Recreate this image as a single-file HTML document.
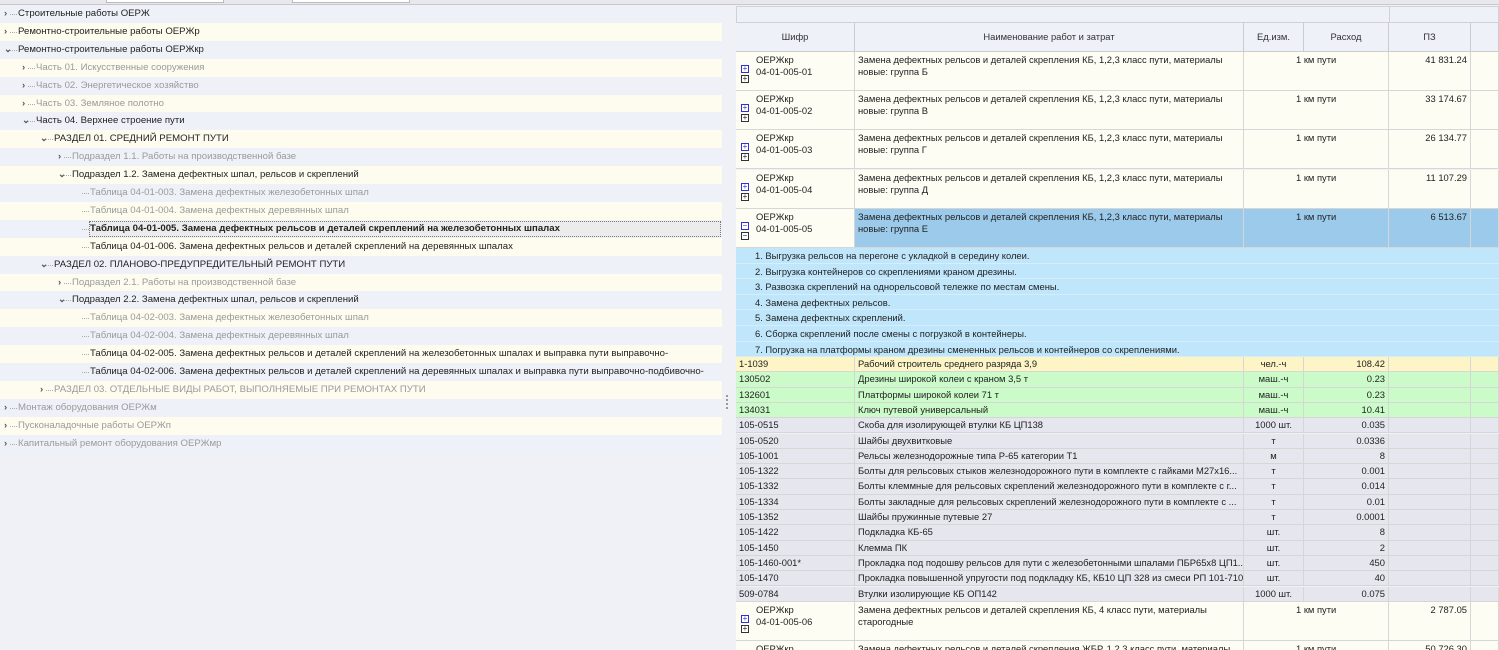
<!DOCTYPE html>
<html style="overflow:hidden;width:1499px;height:650px"><head><meta charset="utf-8"><style>
*{margin:0;padding:0;box-sizing:border-box}
body{width:1499px;height:650px;overflow:hidden;background:#eff1f6;font-family:"Liberation Sans",sans-serif;font-size:10px;color:#222;position:relative}
.a{position:absolute;white-space:nowrap;overflow:hidden}
.tr{position:absolute;left:0;width:722px;height:18px;line-height:18px}
.tr span{position:absolute;font-size:9.6px}
.ar{position:absolute;font-size:11px;color:#555;font-weight:bold}
.g{color:#9a9a9a}
.c{position:absolute;border-right:1px solid #d6d6d6;border-bottom:1px solid #d6d6d6;overflow:hidden;white-space:nowrap;padding:2px 3px;line-height:12px;font-size:9.4px}
.pm{position:absolute;width:8px;height:8px;border:1px solid #333;font-size:8px;line-height:6px;text-align:center;background:#fff}
</style></head><body>
<div class="a" style="left:0;top:0;width:1499px;height:5px;background:#e8e8ec;border-bottom:1px solid #c8c8cc"></div>
<div class="a" style="left:106px;top:0;width:118px;height:3px;border:1px solid #bbb;border-top:0;background:#fff"></div>
<div class="a" style="left:292px;top:0;width:118px;height:3px;border:1px solid #bbb;border-top:0;background:#fff"></div>
<div class="a" style="left:0;top:5px;width:722px;height:448px;background:#fff"></div>
<div id="tree"></div>
<div class="a" style="left:726px;top:395px;width:2px;height:14px;border-left:2px dotted #999"></div>
<div id="grid"></div>
<script>
var T=[[0,'>','Строительные работы ОЕРЖ',0],[0,'>','Ремонтно-строительные работы ОЕРЖр',0],[0,'v','Ремонтно-строительные работы ОЕРЖкр',0],
[1,'>','Часть 01. Искусственные сооружения',1],[1,'>','Часть 02. Энергетическое хозяйство',1],[1,'>','Часть 03. Земляное полотно',1],[1,'v','Часть 04. Верхнее строение пути',0],
[2,'v','РАЗДЕЛ 01. СРЕДНИЙ РЕМОНТ ПУТИ',0],[3,'>','Подраздел 1.1. Работы на производственной базе',1],[3,'v','Подраздел 1.2. Замена дефектных шпал, рельсов и скреплений',0],
[4,'','Таблица 04-01-003. Замена дефектных железобетонных шпал',1],[4,'','Таблица 04-01-004. Замена дефектных деревянных шпал',1],[4,'','Таблица 04-01-005. Замена дефектных рельсов и деталей скреплений на железобетонных шпалах',2],[4,'','Таблица 04-01-006. Замена дефектных рельсов и деталей скреплений на деревянных шпалах',0],
[2,'v','РАЗДЕЛ 02. ПЛАНОВО-ПРЕДУПРЕДИТЕЛЬНЫЙ РЕМОНТ ПУТИ',0],[3,'>','Подраздел 2.1. Работы на производственной базе',1],[3,'v','Подраздел 2.2. Замена дефектных шпал, рельсов и скреплений',0],
[4,'','Таблица 04-02-003. Замена дефектных железобетонных шпал',1],[4,'','Таблица 04-02-004. Замена дефектных деревянных шпал',1],[4,'','Таблица 04-02-005. Замена дефектных рельсов и деталей скреплений на железобетонных шпалах и выправка пути выправочно-подбивочно-рихтовочными машинами',0],[4,'','Таблица 04-02-006. Замена дефектных рельсов и деталей скреплений на деревянных шпалах и выправка пути выправочно-подбивочно-рихтовочными машинами',0],
[2,'>','РАЗДЕЛ 03. ОТДЕЛЬНЫЕ ВИДЫ РАБОТ, ВЫПОЛНЯЕМЫЕ ПРИ РЕМОНТАХ ПУТИ',1],[0,'>','Монтаж оборудования ОЕРЖм',1],[0,'>','Пусконаладочные работы ОЕРЖп',1],[0,'>','Капитальный ремонт оборудования ОЕРЖмр',1]];
var h='';T.forEach(function(r,i){var y=5+i*17.9,x=18+r[0]*18;
h+='<div class="tr" style="top:'+y+'px;background:'+(i%2?'#fdfcef':'#eef1f8')+'">';
if(r[1])h+='<span class="ar" style="left:'+(x-14)+'px">'+(r[1]=='>'?'›':'⌄')+'</span>';
h+='<span style="left:'+(x-8)+'px;top:9px;width:7px;border-top:1px dotted #aaa;height:0"></span>';
if(r[3]==2)h+='<span style="left:'+(x-1)+'px;top:1px;width:'+(722-x)+'px;height:16px;border:1px dotted #777;background:#ececec"></span>';
h+='<span class="'+(r[3]==1?'g':'')+'" style="left:'+x+'px;'+(r[3]==2?'font-weight:bold;color:#222':'')+'">'+r[2]+'</span></div>';});
document.getElementById('tree').innerHTML=h;
var X=[736,855,1244,1304,1389,1471,1499];
var g='<div class="a" style="left:736px;top:6px;width:763px;height:17px;background:#eef1f8;border:1px solid #d0d0d8"></div>';
g+='<div class="a" style="left:1389px;top:6px;width:1px;height:17px;background:#d0d0d8"></div>';
var H=['Шифр','Наименование работ и затрат','Ед.изм.','Расход','ПЗ',''];
H.forEach(function(t,i){g+='<div class="c" style="left:'+X[i]+'px;top:23px;width:'+(X[i+1]-X[i])+'px;height:29px;line-height:24px;text-align:center;background:#eef1f8;color:#333;border-color:#ccc">'+t+'</div>'});
function big(y,code,name,val,sel){var bg='#fdfdf4';
g+='<div class="c" style="left:736px;top:'+y+'px;width:119px;height:39px;background:'+bg+';padding-left:20px">ОЕРЖкр<br>'+code+'</div>';
g+='<div class="pm" style="left:741px;top:'+(y+13)+'px;border-color:#3030d0;color:#3030d0">'+(sel?'−':'+')+'</div><div class="pm" style="left:741px;top:'+(y+23)+'px">'+(sel?'−':'+')+'</div>';
g+='<div class="c" style="left:855px;top:'+y+'px;width:389px;height:39px;background:'+(sel?'#9ccaea':bg)+'">'+name+'</div>';
g+='<div class="c" style="left:1244px;top:'+y+'px;width:145px;height:39px;background:'+(sel?'#9ccaea':bg)+';padding-left:52px">1 км пути</div>';
g+='<div class="c" style="left:1389px;top:'+y+'px;width:82px;height:39px;text-align:right;background:'+(sel?'#9ccaea':bg)+'">'+val+'</div>';
g+='<div class="c" style="left:1471px;top:'+y+'px;width:28px;height:39px;background:'+(sel?'#9ccaea':bg)+'"></div>';}
var n='Замена дефектных рельсов и деталей скрепления КБ, 1,2,3 класс пути, материалы<br>новые: группа ';
big(52,'04-01-005-01',n+'Б','41 831.24');big(91,'04-01-005-02',n+'В','33 174.67');big(130,'04-01-005-03',n+'Г','26 134.77');big(170,'04-01-005-04',n+'Д','11 107.29');big(209,'04-01-005-05',n+'Е','6 513.67',1);
var D=['1. Выгрузка рельсов на перегоне с укладкой в середину колеи.','2. Выгрузка контейнеров со скреплениями краном дрезины.','3. Развозка скреплений на однорельсовой тележке по местам смены.','4. Замена дефектных рельсов.','5. Замена дефектных скреплений.','6. Сборка скреплений после смены с погрузкой в контейнеры.','7. Погрузка на платформы краном дрезины смененных рельсов и контейнеров со скреплениями.'];
D.forEach(function(t,i){g+='<div class="a" style="left:736px;top:'+(248+i*15.6)+'px;width:763px;height:15.6px;line-height:15px;font-size:9.4px;padding-left:19px;background:#bfe6fb;border-bottom:1px solid #d6eefa">'+t+'</div>'});
var R=[['1-1039','Рабочий строитель среднего разряда 3,9','чел.-ч','108.42','#fdf5c6'],['130502','Дрезины широкой колеи с краном 3,5 т','маш.-ч','0.23','#cbfbc9'],['132601','Платформы широкой колеи 71 т','маш.-ч','0.23','#cbfbc9'],['134031','Ключ путевой универсальный','маш.-ч','10.41','#cbfbc9'],
['105-0515','Скоба для изолирующей втулки КБ ЦП138','1000 шт.','0.035'],['105-0520','Шайбы двухвитковые','т','0.0336'],['105-1001','Рельсы железнодорожные типа Р-65 категории Т1','м','8'],['105-1322','Болты для рельсовых стыков железнодорожного пути в комплекте с гайками М27х16...','т','0.001'],['105-1332','Болты клеммные для рельсовых скреплений железнодорожного пути в комплекте с г...','т','0.014'],['105-1334','Болты закладные для рельсовых скреплений железнодорожного пути в комплекте с ...','т','0.01'],['105-1352','Шайбы пружинные путевые 27','т','0.0001'],['105-1422','Подкладка КБ-65','шт.','8'],['105-1450','Клемма ПК','шт.','2'],['105-1460-001*','Прокладка под подошву рельсов для пути с железобетонными шпалами ПБР65х8 ЦП1...','шт.','450'],['105-1470','Прокладка повышенной упругости под подкладку КБ, КБ10 ЦП 328 из смеси РП 101-710','шт.','40'],['509-0784','Втулки изолирующие КБ ОП142','1000 шт.','0.075']];
R.forEach(function(r,i){var y=357+i*15.3,bg=r[4]||'#e6e6ee',s='top:'+y+'px;height:15.3px;padding-top:1px;background:'+bg+';';
g+='<div class="c" style="left:736px;width:119px;'+s+'">'+r[0]+'</div><div class="c" style="left:855px;width:389px;'+s+'">'+r[1]+'</div><div class="c" style="left:1244px;width:60px;text-align:center;'+s+'">'+r[2]+'</div><div class="c" style="left:1304px;width:85px;text-align:right;'+s+'">'+r[3]+'</div><div class="c" style="left:1389px;width:82px;'+s+'"></div><div class="c" style="left:1471px;width:28px;'+s+'"></div>';});
big(602,'04-01-005-06','Замена дефектных рельсов и деталей скрепления КБ, 4 класс пути, материалы<br>старогодные','2 787.05');
big(641,'04-01-005-07','Замена дефектных рельсов и деталей скрепления ЖБР, 1,2,3 класс пути, материалы','50 726.30');
document.getElementById('grid').innerHTML=g;
</script>
</body></html>
